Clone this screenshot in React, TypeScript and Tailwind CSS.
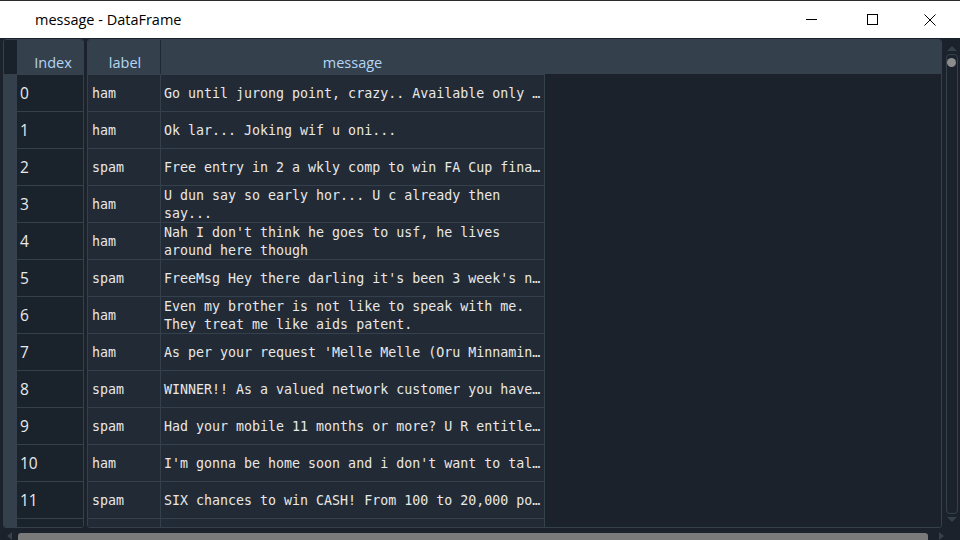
const rows: { label: string; lines: string[] }[] = [
  { label: 'ham', lines: ['Go until jurong point, crazy.. Available only …'] },
  { label: 'ham', lines: ['Ok lar... Joking wif u oni...'] },
  { label: 'spam', lines: ['Free entry in 2 a wkly comp to win FA Cup fina…'] },
  { label: 'ham', lines: ['U dun say so early hor... U c already then', 'say...'] },
  { label: 'ham', lines: ["Nah I don't think he goes to usf, he lives", 'around here though'] },
  { label: 'spam', lines: ["FreeMsg Hey there darling it's been 3 week's n…"] },
  { label: 'ham', lines: ['Even my brother is not like to speak with me.', 'They treat me like aids patent.'] },
  { label: 'ham', lines: ["As per your request 'Melle Melle (Oru Minnamin…"] },
  { label: 'spam', lines: ['WINNER!! As a valued network customer you have…'] },
  { label: 'spam', lines: ['Had your mobile 11 months or more? U R entitle…'] },
  { label: 'ham', lines: ["I'm gonna be home soon and i don't want to tal…"] },
  { label: 'spam', lines: ['SIX chances to win CASH! From 100 to 20,000 po…'] },
]

const mono = { fontFamily: '"DejaVu Sans Mono", "Liberation Mono", monospace' }
const sans = { fontFamily: '"Open Sans", "Noto Sans", sans-serif' }

function TitleBar() {
  return (
    <div className="h-[38px] bg-white border-t border-[#2b2b2b] flex items-center shrink-0" style={sans}>
      <span className="ml-[35px] text-[14.5px] text-black">message - DataFrame</span>
      <div className="ml-auto flex items-center h-full mr-[7px]">
        <div className="w-[46px] h-full flex items-center justify-center">
          <div className="w-[11px] h-px bg-black" />
        </div>
        <div className="w-[46px] h-full flex items-center justify-center ml-[15px]">
          <div className="w-[11px] h-[11px] border border-black" />
        </div>
        <div className="w-[46px] h-full flex items-center justify-center ml-[12px]">
          <svg width="12" height="12" viewBox="0 0 12 12">
            <path d="M0.5 0.5 L11.5 11.5 M11.5 0.5 L0.5 11.5" stroke="#000" strokeWidth="1" />
          </svg>
        </div>
      </div>
    </div>
  )
}

function IndexPanel() {
  return (
    <div className="w-[81px] h-full border border-[#34414d] rounded-[3px] overflow-hidden flex flex-col shrink-0">
      <div className="h-[34px] flex shrink-0">
        <div className="w-[13px] bg-[#19212a]" />
        <div className="flex-1 bg-[#34414d] flex items-end justify-center pl-[6px] text-[14.5px] text-[#b4d6f6]" style={sans}>
          Index
        </div>
      </div>
      {rows.map((_, i) => (
        <div key={i} className="h-[37px] flex shrink-0 border-t border-[#34414d]">
          <div className="w-[13px] bg-[#34414d]" />
          <div className="flex-1 bg-[#1a222b] flex items-center pl-[3px] pt-[1px] text-[15.5px] text-[#e8eaec]" style={sans}>
            {i}
          </div>
        </div>
      ))}
      <div className="h-[37px] flex shrink-0 border-t border-[#34414d]">
        <div className="w-[13px] bg-[#34414d]" />
        <div className="flex-1 bg-[#1a222b]" />
      </div>
    </div>
  )
}

function DataPanel() {
  return (
    <div className="flex-1 h-full border border-[#34414d] rounded-[3px] overflow-hidden flex flex-col">
      <div className="h-[34px] bg-[#34414d] flex shrink-0 text-[14.5px] text-[#b4d6f6]" style={sans}>
        <div className="w-[73px] flex items-end justify-center pl-[2px] border-r border-[#1f2831]">label</div>
        <div className="w-[383px] flex items-end justify-center">message</div>
      </div>
      {[...rows, null].map((r, i) => (
        <div key={i} className="h-[37px] flex shrink-0">
          <div className="w-[457px] flex bg-[#222a35] border-t border-r border-[#34414d] text-[13.3px] text-[#e8e8e8]" style={mono}>
            <div className="w-[73px] flex items-center pl-[4px] pt-[1px] border-r border-[#34414d]">{r?.label}</div>
            <div className="flex-1 flex flex-col justify-center pl-[3px] pt-[1px] leading-[18px] overflow-hidden whitespace-nowrap">
              {r?.lines.map((l, j) => <span key={j}>{l}</span>)}
            </div>
          </div>
          <div className="flex-1 bg-[#1b222c]" />
        </div>
      ))}
    </div>
  )
}

function VScroll() {
  return (
    <div className="w-[13px] h-full flex flex-col items-center shrink-0">
      <svg width="10" height="8" viewBox="0 0 10 8" className="mt-[6px]">
        <path d="M0 6 L5 1 L10 6 Z" fill="#34414d" />
      </svg>
      <div className="w-[12px] flex-1 mt-[1px] mb-[1px] border border-[#34414d] rounded-[4px] flex flex-col items-center">
        <div className="w-[9px] h-[9px] rounded-full bg-[#8c8c8c] mt-[3px]" />
      </div>
      <svg width="10" height="8" viewBox="0 0 10 8" className="mb-[5px]">
        <path d="M0 2 L10 2 L5 7 Z" fill="#34414d" />
      </svg>
    </div>
  )
}

export default function App() {
  return (
    <div className="w-[960px] h-[540px] bg-[#1b222c] flex flex-col overflow-hidden">
      <TitleBar />
      <div className="flex-1 min-h-0 flex pt-[1px] pl-[3px] pr-[2px] pb-[3px] gap-[3px]">
        <IndexPanel />
        <DataPanel />
        <VScroll />
      </div>
      <div className="h-[9px] flex items-end shrink-0">
        <svg width="8" height="8" viewBox="0 0 8 8" className="ml-[6px]">
          <path d="M6 0 L1 4 L6 8 Z" fill="#34414d" />
        </svg>
        <div className="ml-[4px] w-[910px] h-[7px] bg-[#7a7a7a] rounded-t-[3px]" />
        <svg width="8" height="8" viewBox="0 0 8 8" className="ml-[9px]">
          <path d="M2 0 L7 4 L2 8 Z" fill="#34414d" />
        </svg>
      </div>
    </div>
  )
}
